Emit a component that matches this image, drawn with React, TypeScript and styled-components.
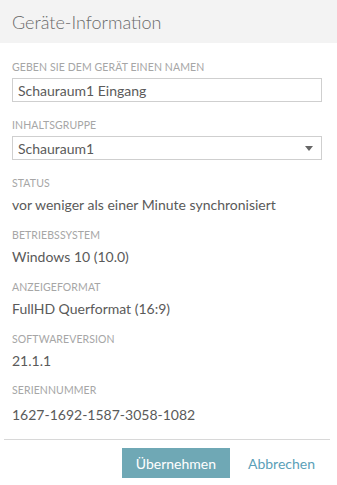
import React from "react";
import styled, { createGlobalStyle } from "styled-components";

const Global = createGlobalStyle`
  html, body { margin: 0; padding: 0; background: #fff; }
  body { font-family: Lato, "Open Sans", sans-serif; color: #5a5a5a; }
  * { box-sizing: border-box; }
`;

const Dialog = styled.div`
  width: 337px;
  height: 485px;
  display: flex;
  flex-direction: column;
  background: #fff;
`;

const Header = styled.div`
  height: 43px;
  background: #f3f3f3;
  display: flex;
  align-items: center;
  padding: 0 12px;
`;

const Title = styled.h1`
  margin: 0;
  font-family: Lato, sans-serif;
  font-weight: 300;
  font-size: 18px;
  color: #6a6a6a;
  line-height: 22px;
`;

const Body = styled.div`
  padding: 17px 15px 0 12px;
  display: flex;
  flex-direction: column;
`;

const Field = styled.div<{ $gap?: number }>`
  display: flex;
  flex-direction: column;
  margin-bottom: ${(p) => p.$gap ?? 13}px;
`;

const Label = styled.div<{ $mb?: number }>`
  font-size: 10.5px;
  line-height: 14px;
  color: #a6a6a6;
  text-transform: uppercase;
  letter-spacing: 0.1px;
  margin-bottom: ${(p) => p.$mb ?? 5}px;
`;

const Value = styled.div<{ $mt?: number }>`
  font-size: 14px;
  line-height: 20px;
  color: #5a5a5a;
  margin-top: ${(p) => p.$mt ?? 0}px;
`;

const Input = styled.input`
  width: 310px;
  height: 24px;
  border: 1px solid #cfcfcf;
  padding: 0 5px;
  font-family: Lato, sans-serif;
  font-size: 14px;
  color: #5a5a5a;
  outline: none;
  background: #fff;
`;

const SelectBox = styled.div`
  position: relative;
  width: 310px;
  height: 24px;
  border: 1px solid #cfcfcf;
  padding: 0 5px;
  display: flex;
  align-items: center;
  font-size: 14px;
  color: #5a5a5a;
`;

const Caret = styled.span`
  position: absolute;
  right: 8px;
  top: 9px;
  width: 0;
  height: 0;
  border-left: 4.5px solid transparent;
  border-right: 4.5px solid transparent;
  border-top: 5px solid #666;
`;

const Divider = styled.hr`
  margin: 0 7px 0 4px;
  border: none;
  border-top: 1px solid #d8d8d8;
`;

const Footer = styled.div`
  display: flex;
  justify-content: flex-end;
  align-items: center;
  gap: 18px;
  padding: 8px 22px 0 0;
`;

const PrimaryButton = styled.button`
  width: 108px;
  height: 30px;
  border: none;
  background: #6fa8b5;
  color: #fff;
  font-family: Lato, sans-serif;
  font-size: 14px;
`;

const LinkButton = styled.button`
  border: none;
  background: none;
  padding: 0;
  color: #5b9fb8;
  font-family: Lato, sans-serif;
  font-size: 14px;
`;

export default function App() {
  return (
    <>
      <Global />
      <Dialog>
        <Header>
          <Title>Geräte-Information</Title>
        </Header>
        <Body>
          <Field $gap={16}>
            <Label $mb={4}>Geben Sie dem Gerät einen Namen</Label>
            <Input defaultValue="Schauraum1 Eingang" />
          </Field>
          <Field $gap={16}>
            <Label $mb={4}>Inhaltsgruppe</Label>
            <SelectBox>
              Schauraum1
              <Caret />
            </SelectBox>
          </Field>
          <Field>
            <Label>Status</Label>
            <Value>vor weniger als einer Minute synchronisiert</Value>
          </Field>
          <Field>
            <Label>Betriebssystem</Label>
            <Value>Windows 10 (10.0)</Value>
          </Field>
          <Field>
            <Label>Anzeigeformat</Label>
            <Value>FullHD Querformat (16:9)</Value>
          </Field>
          <Field $gap={12}>
            <Label>Softwareversion</Label>
            <Value>21.1.1</Value>
          </Field>
          <Field $gap={14}>
            <Label>Seriennummer</Label>
            <Value $mt={3}>1627-1692-1587-3058-1082</Value>
          </Field>
        </Body>
        <Divider />
        <Footer>
          <PrimaryButton>Übernehmen</PrimaryButton>
          <LinkButton>Abbrechen</LinkButton>
        </Footer>
      </Dialog>
    </>
  );
}
